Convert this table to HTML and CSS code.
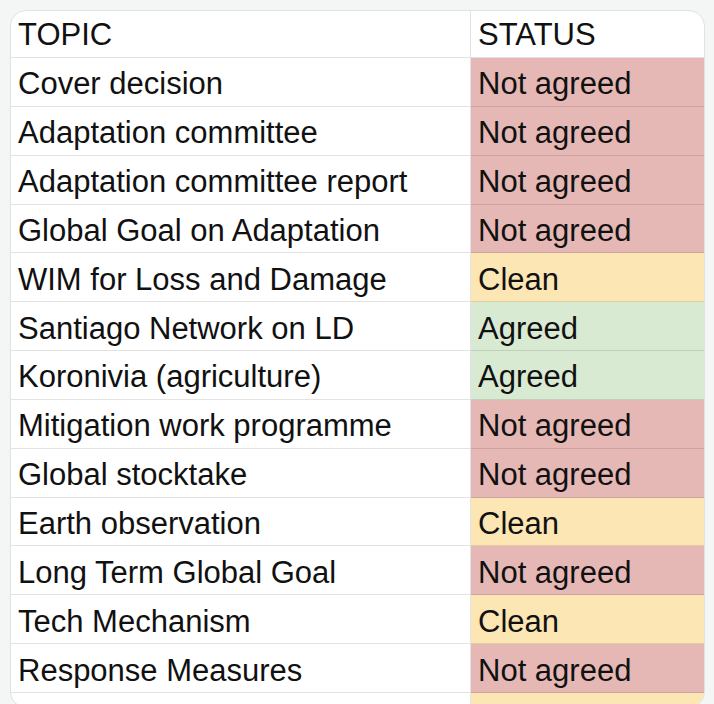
FILE: index.html
```html
<!DOCTYPE html>
<html lang="en">
<head>
<meta charset="utf-8">
<title>Topic status</title>
<link rel="stylesheet" href="styles.css">
</head>
<body>
<div class="card">
  <div class="sheet">
    <div class="row head"><div class="cell topic">TOPIC</div><div class="cell status">STATUS</div></div>
    <div class="row"><div class="cell topic">Cover decision</div><div class="cell status no">Not agreed</div></div>
    <div class="row"><div class="cell topic">Adaptation committee</div><div class="cell status no">Not agreed</div></div>
    <div class="row"><div class="cell topic">Adaptation committee report</div><div class="cell status no">Not agreed</div></div>
    <div class="row"><div class="cell topic">Global Goal on Adaptation</div><div class="cell status no">Not agreed</div></div>
    <div class="row"><div class="cell topic">WIM for Loss and Damage</div><div class="cell status clean">Clean</div></div>
    <div class="row"><div class="cell topic">Santiago Network on LD</div><div class="cell status yes">Agreed</div></div>
    <div class="row"><div class="cell topic">Koronivia (agriculture)</div><div class="cell status yes">Agreed</div></div>
    <div class="row"><div class="cell topic">Mitigation work programme</div><div class="cell status no">Not agreed</div></div>
    <div class="row"><div class="cell topic">Global stocktake</div><div class="cell status no">Not agreed</div></div>
    <div class="row"><div class="cell topic">Earth observation</div><div class="cell status clean">Clean</div></div>
    <div class="row"><div class="cell topic">Long Term Global Goal</div><div class="cell status no">Not agreed</div></div>
    <div class="row"><div class="cell topic">Tech Mechanism</div><div class="cell status clean">Clean</div></div>
    <div class="row"><div class="cell topic">Response Measures</div><div class="cell status no">Not agreed</div></div>
    <div class="row"><div class="cell topic"></div><div class="cell status clean"></div></div>
  </div>
</div>
</body>
</html>
```

FILE: styles.css
```css
html, body {
  margin: 0;
  padding: 0;
  overflow: hidden;
  background: #f4f6f6;
}

body {
  padding: 10px 9px 0 10px;
  font-family: "Liberation Sans", Arial, Helvetica, sans-serif;
  color: #111;
}

.card {
  box-sizing: border-box;
  width: 695px;
  height: 698px;
  border: 1px solid #dde2e2;
  border-radius: 16px;
  overflow: hidden;
  background: #fff;
}

.sheet {
  display: flex;
  flex-direction: column;
}

.row {
  display: grid;
  grid-template-columns: 460px 1fr;
  height: 48.85px;
}

.row.head {
  height: 47px;
}

.cell {
  box-sizing: border-box;
  display: flex;
  align-items: center;
  padding-left: 7px;
  padding-top: 4px;
  font-size: 31px;
  line-height: 1;
  white-space: nowrap;
  border-bottom: 1px solid rgba(0, 0, 0, 0.11);
}

.head .cell {
  padding-top: 0;
}

.topic {
  border-right: 1px solid rgba(0, 0, 0, 0.11);
}

.status.no {
  background: #e6b8b5;
}

.status.clean {
  background: #fce6b4;
}

.status.yes {
  background: #d9ead3;
}
```
